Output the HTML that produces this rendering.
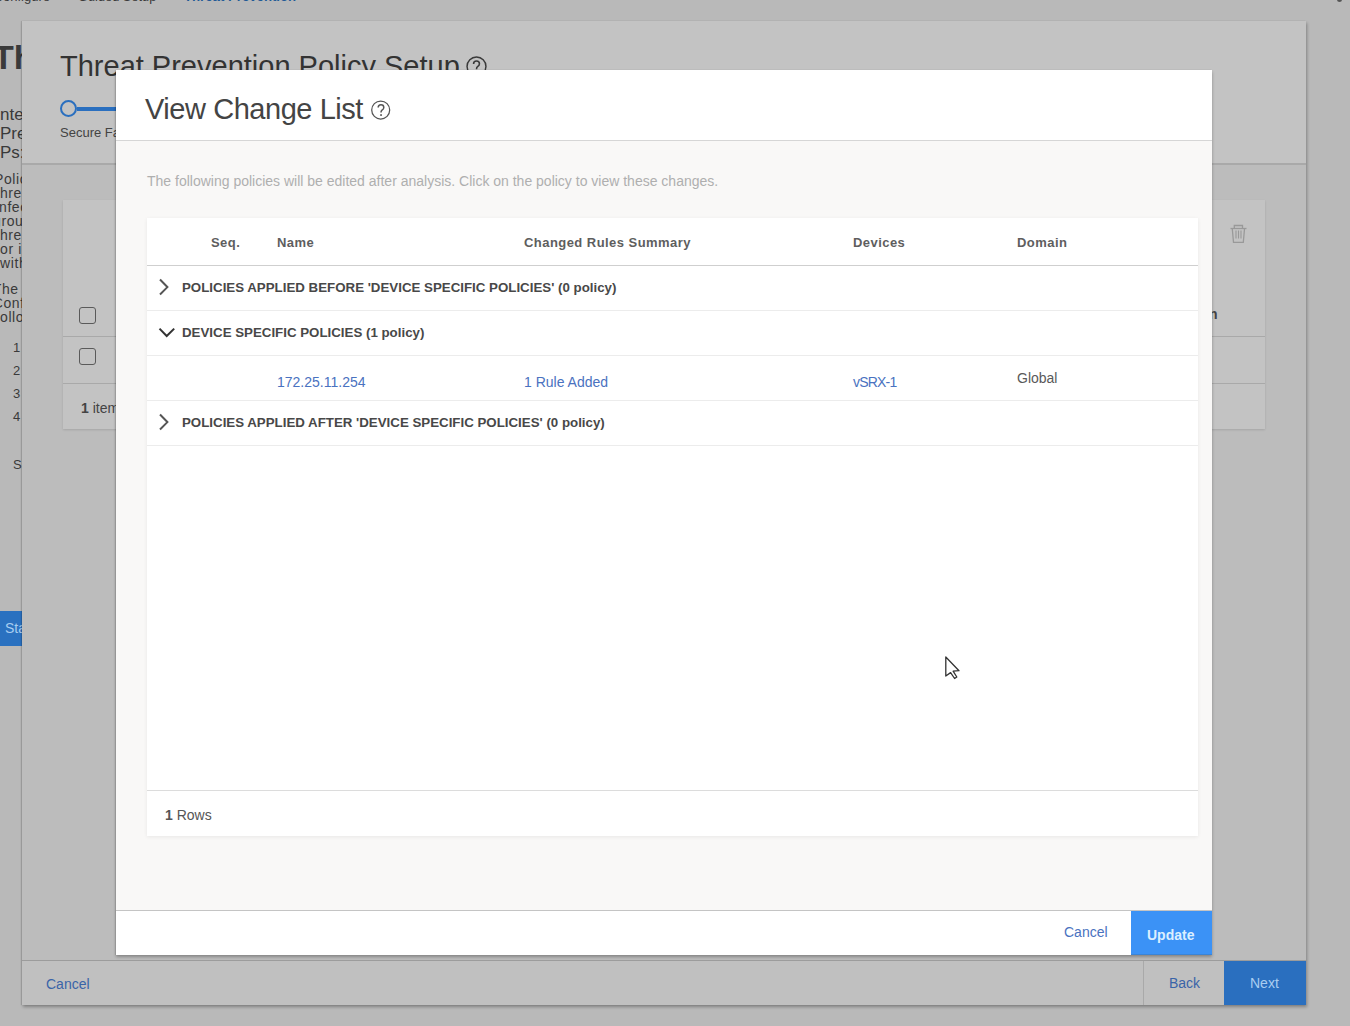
<!DOCTYPE html>
<html><head><meta charset="utf-8">
<style>
*{box-sizing:border-box;margin:0;padding:0}
html,body{width:1350px;height:1026px;overflow:hidden}
body{background:#b9b9b9;font-family:"Liberation Sans",sans-serif;position:relative;color:#444}
.a{position:absolute;white-space:nowrap}
/* background page (dimmed) */
.bgt{color:#3a3a3a}
/* wizard */
#wiz{position:absolute;left:22px;top:21px;width:1284px;height:984px;background:#bcbcbc;box-shadow:1px 2px 3px rgba(0,0,0,.3),-1px 0 1px rgba(0,0,0,.12)}
/* modal */
#modal{position:absolute;left:116px;top:70px;width:1096px;height:885px;background:#f9f8f7;box-shadow:0 2px 3px rgba(0,0,0,.28),-1px 0 1px rgba(0,0,0,.1)}
.mhead{position:absolute;left:0;top:0;width:1096px;height:71px;background:#fff;border-bottom:1px solid #d6d6d6}
.mfoot{position:absolute;left:0;top:840px;width:1096px;height:45px;background:#fff;border-top:1px solid #c4c4c4}
.card{position:absolute;left:31px;top:148px;width:1051px;height:618px;background:#fff;box-shadow:0 1px 4px rgba(0,0,0,.07)}
.hl{position:absolute;left:0;width:1051px;height:1px;background:#ececec}
.th{font-weight:bold;font-size:13px;letter-spacing:0.45px;color:#5e5e5e}
.grp{font-weight:bold;font-size:13.3px;color:#484848}
.lnk{color:#4a72c0;font-size:14px}
</style></head>
<body>
<!-- background page -->
<div class="a" style="left:auto;right:1300px;top:-10px;font-size:13px;line-height:14px;color:#3a3a3a">Configure</div>
<div class="a" style="left:61px;top:-10px;font-size:13px;line-height:14px;color:#555">›</div>
<div class="a" style="left:78px;top:-10px;font-size:12.8px;line-height:14px;color:#3a3a3a">Guided Setup</div>
<div class="a" style="left:167px;top:-10px;font-size:13px;line-height:14px;color:#555">›</div>
<div class="a" style="left:184px;top:-10px;font-size:13.2px;line-height:14px;font-weight:bold;color:#1f5a96">Threat Prevention</div>
<div class="a" style="left:1337px;top:-3.5px;width:5px;height:5px;border-radius:50%;background:#555"></div>

<div class="a" style="left:-7px;top:38px;font-size:34px;font-weight:bold;color:#3a3a3a">Th</div>
<div class="a" style="left:0;top:105px;font-size:17px;line-height:19.2px;color:#3a3a3a">nte<br>Pre<br>Ps:</div>
<div class="a" style="left:-6px;top:172.2px;font-size:14px;line-height:14px;letter-spacing:0.6px;color:#3a3a3a">Policies</div>
<div class="a" style="left:-9.2px;top:186.1px;font-size:14px;line-height:14px;letter-spacing:0.6px;color:#3a3a3a">Threats</div>
<div class="a" style="left:-5.5px;top:200.0px;font-size:14px;line-height:14px;letter-spacing:0.6px;color:#3a3a3a">Infected</div>
<div class="a" style="left:-7px;top:214.0px;font-size:14px;line-height:14px;letter-spacing:0.6px;color:#3a3a3a">group</div>
<div class="a" style="left:-9.2px;top:227.9px;font-size:14px;line-height:14px;letter-spacing:0.6px;color:#3a3a3a">Threats</div>
<div class="a" style="left:-4.5px;top:241.8px;font-size:14px;line-height:14px;letter-spacing:0.6px;color:#3a3a3a">for infected</div>
<div class="a" style="left:0px;top:256.3px;font-size:14px;line-height:14px;letter-spacing:0.6px;color:#3a3a3a">with</div>
<div class="a" style="left:-7.2px;top:281.9px;font-size:14px;line-height:14px;letter-spacing:0.6px;color:#3a3a3a">The</div>
<div class="a" style="left:-7.3px;top:295.9px;font-size:14px;line-height:14px;letter-spacing:0.6px;color:#3a3a3a">Configure</div>
<div class="a" style="left:-4.5px;top:309.9px;font-size:14px;line-height:14px;letter-spacing:0.6px;color:#3a3a3a">following</div>
<div class="a" style="left:13px;top:336px;font-size:13px;line-height:23px;color:#3a3a3a">1<br>2<br>3<br>4</div>
<div class="a" style="left:13px;top:457px;font-size:13px;color:#3a3a3a">S</div>
<div class="a" style="left:0;top:611px;width:30px;height:35px;background:#2a71c0"></div>
<div class="a" style="left:5px;top:620px;font-size:14px;color:#a7cdf0">Start</div>

<div id="wiz">
  <div class="a" style="left:0;top:0;width:1284px;height:142px;background:#c3c3c3"></div>
  <div class="a" style="left:0;top:940px;width:1284px;height:44px;background:#c0c0c0"></div>
  <div class="a" style="left:38px;top:29px;font-size:29px;color:#333">Threat Prevention Policy Setup</div>
  <svg class="a" style="left:444px;top:35px" width="21" height="21" viewBox="0 0 20 20"><circle cx="10" cy="10" r="9" fill="none" stroke="#3a3a3a" stroke-width="1.4"/><path d="M7.2 7.6 Q7.2 4.8 10 4.8 Q12.8 4.8 12.8 7.4 Q12.8 9 11 10.2 Q10 10.9 10 12.6" fill="none" stroke="#3a3a3a" stroke-width="1.5"/><rect x="9.2" y="14.2" width="1.7" height="1.7" fill="#3a3a3a"/></svg>
  <div class="a" style="left:38px;top:79px;width:17px;height:17px;border:2.5px solid #2a6fbf;border-radius:50%"></div>
  <div class="a" style="left:55px;top:86px;width:60px;height:4px;background:#2a6fbf"></div>
  <div class="a" style="left:38px;top:104px;font-size:13px;color:#444">Secure Fabric</div>
  <div class="a" style="left:0;top:142px;width:1284px;height:2px;background:#a9a9a9"></div>
  <div class="a" style="left:41px;top:179px;width:1202px;height:229px;background:#c3c3c3;box-shadow:0 1px 2px rgba(0,0,0,.12)">
    <div class="a" style="left:0;top:136px;width:1202px;height:1px;background:#a9a9a9"></div>
    <div class="a" style="left:0;top:183px;width:1202px;height:1px;background:#a9a9a9"></div>
    <div class="a" style="left:16px;top:107px;width:17px;height:17px;border:1.5px solid #5a5a5a;border-radius:3px"></div>
    <div class="a" style="left:16px;top:148px;width:17px;height:17px;border:1.5px solid #5a5a5a;border-radius:3px"></div>
    <div class="a" style="left:18px;top:200px;font-size:14px;color:#444"><b>1</b> items</div>
    <div class="a" style="left:1146px;top:106px;font-size:14px;font-weight:bold;color:#444">n</div>
    <svg class="a" style="left:1166px;top:24px" width="20" height="20" viewBox="0 0 20 20"><g fill="none" stroke="#999" stroke-width="1.3"><path d="M1.5 4.5 H17.5"/><path d="M5.3 4.5 V1.5 H13.5 V4.5"/><path d="M3.3 5 L4.5 18.3 H14.3 L15.5 5"/><path d="M7 6.5 V14.5 M9.5 6.5 V14.5 M12 6.5 V14.5" stroke-width="1.1"/></g></svg>
  </div>
  <div class="a" style="left:0;top:939px;width:1284px;height:1px;background:#9c9c9c"></div>
  <div class="a" style="left:24px;top:955px;font-size:14px;color:#3a64a8">Cancel</div>
  <div class="a" style="left:1121px;top:940px;width:1px;height:44px;background:#a9a9a9"></div>
  <div class="a" style="left:1147px;top:954px;font-size:14px;color:#3a64a8">Back</div>
  <div class="a" style="left:1202px;top:940px;width:82px;height:44px;background:#2a6fbf"></div>
  <div class="a" style="left:1228px;top:954px;font-size:14px;color:#a9cdf0">Next</div>
</div>

<div id="modal">
  <div class="mhead">
    <div class="a" style="left:29px;top:23px;font-size:29px;letter-spacing:-0.45px;color:#444">View Change List</div>
    <svg class="a" style="left:255px;top:30px" width="20" height="20" viewBox="0 0 20 20"><circle cx="9.7" cy="10" r="9" fill="none" stroke="#555" stroke-width="1.25"/><path d="M7.2 7.6 Q7.2 4.8 10 4.8 Q12.8 4.8 12.8 7.4 Q12.8 9 11 10.2 Q10 10.9 10 12.6" fill="none" stroke="#555" stroke-width="1.5"/><rect x="9.2" y="14.2" width="1.7" height="1.7" fill="#555"/></svg>
  </div>
  <div class="a" style="left:31px;top:103px;font-size:14px;color:#afafaf">The following policies will be edited after analysis. Click on the policy to view these changes.</div>
  <div class="card">
    <div class="hl" style="top:47px;background:#cfcfcf"></div>
    <div class="hl" style="top:92px"></div>
    <div class="hl" style="top:137px"></div>
    <div class="hl" style="top:182px"></div>
    <div class="hl" style="top:227px"></div>
    <div class="hl" style="top:572px;background:#dcdcdc"></div>
    <div class="a th" style="left:64px;top:17px">Seq.</div>
    <div class="a th" style="left:130px;top:17px">Name</div>
    <div class="a th" style="left:377px;top:17px">Changed Rules Summary</div>
    <div class="a th" style="left:706px;top:17px">Devices</div>
    <div class="a th" style="left:870px;top:17px">Domain</div>
    <svg class="a" style="left:0;top:0" width="40" height="230"><path d="M13 61.5 L20.4 69.1 L13 76.5" fill="none" stroke="#555" stroke-width="2"/><path d="M12.5 110.6 L19.7 118 L27.2 110.6" fill="none" stroke="#333" stroke-width="2"/><path d="M13 196.5 L20.4 204.1 L13 211.5" fill="none" stroke="#555" stroke-width="2"/></svg>
    <div class="a grp" style="left:35px;top:62px">POLICIES APPLIED BEFORE 'DEVICE SPECIFIC POLICIES' (0 policy)</div>
    <div class="a grp" style="left:35px;top:107px">DEVICE SPECIFIC POLICIES (1 policy)</div>
    <div class="a lnk" style="left:130px;top:156px">172.25.11.254</div>
    <div class="a lnk" style="left:377px;top:156px">1 Rule Added</div>
    <div class="a lnk" style="left:706px;top:156px;letter-spacing:-0.8px">vSRX-1</div>
    <div class="a" style="left:870px;top:152px;font-size:14px;color:#595959">Global</div>
    <div class="a grp" style="left:35px;top:197px">POLICIES APPLIED AFTER 'DEVICE SPECIFIC POLICIES' (0 policy)</div>
    <div class="a" style="left:18px;top:589px;font-size:14px;color:#555"><b>1</b> Rows</div>
  </div>
  <div class="mfoot">
    <div class="a lnk" style="left:948px;top:13px">Cancel</div>
    <div class="a" style="left:1015px;top:0;width:81px;height:44px;background:#3b92f6;border-bottom:1px solid #3a84d6"></div>
    <div class="a" style="left:1031px;top:16px;font-size:14px;font-weight:bold;color:#dcefff">Update</div>
  </div>
</div>
<svg class="a" style="left:940px;top:652px" width="24" height="32" viewBox="0 0 24 32"><path d="M5.8 5 L5.8 24 L10.6 20.6 L14.6 26.5 L16.8 25 L13.1 19.2 L19 18.7 Z" fill="#fff" stroke="#333" stroke-width="1.3" stroke-linejoin="round"/></svg>
</body></html>
